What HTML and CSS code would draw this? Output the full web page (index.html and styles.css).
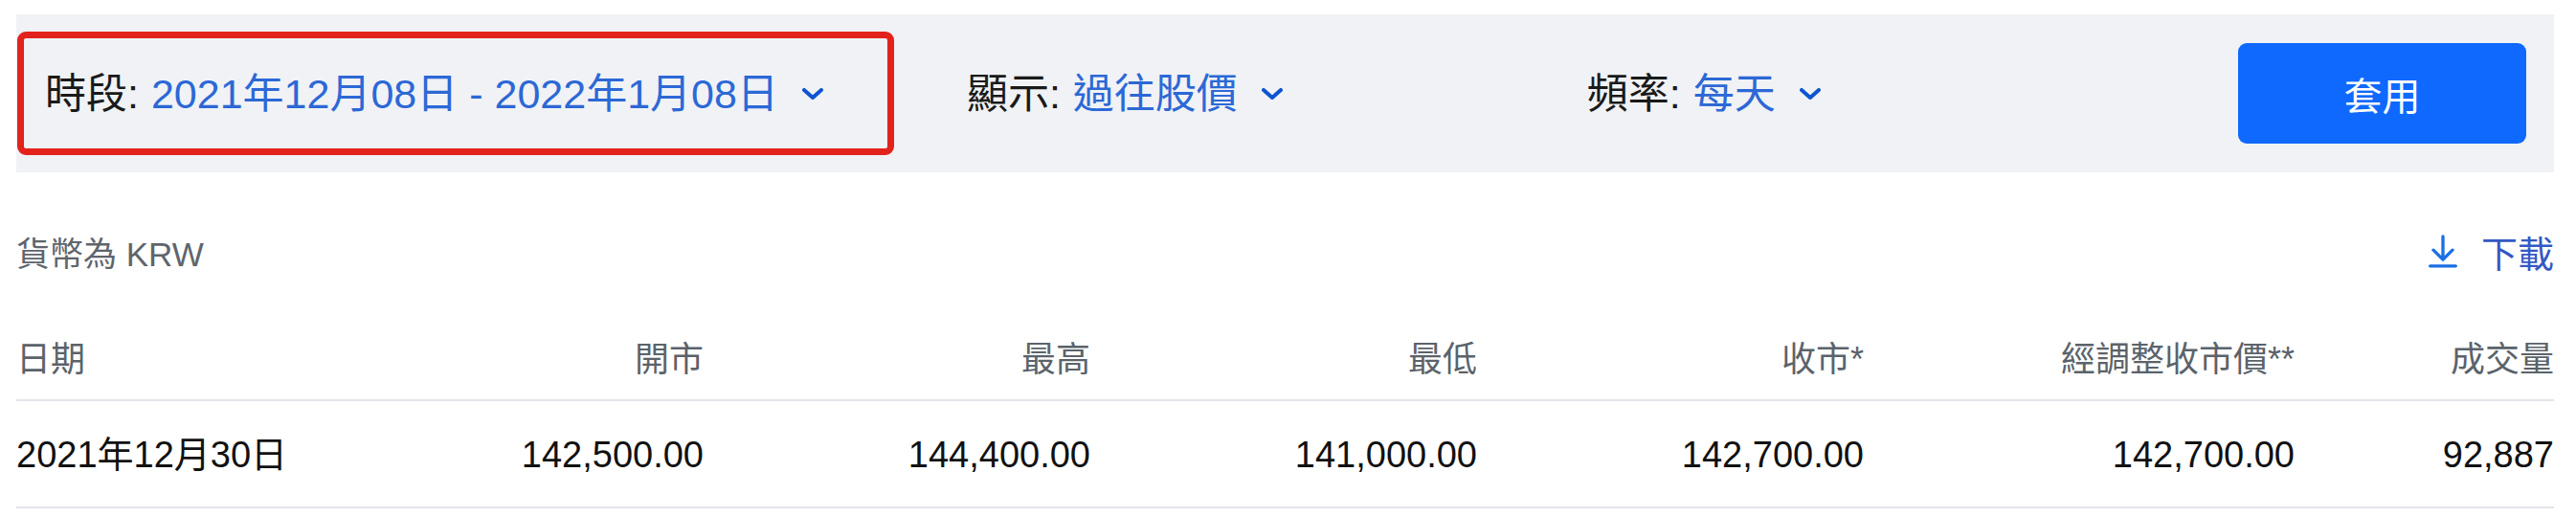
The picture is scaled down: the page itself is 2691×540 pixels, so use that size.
FILE: index.html
```html
<!DOCTYPE html>
<html lang="zh-Hant">
<head>
    <meta charset="UTF-8" />
    <title>過往股價</title>
    <link rel="stylesheet" href="styles.css">
</head>
<body>
<main>
    <div class="toolbar">
        <div class="filter filter-period">
            <span class="filter-label">時段:</span>
            <span class="filter-value">2021年12月08日 - 2022年1月08日</span>
            <svg class="chevron" viewBox="0 0 24 12"><path d="M3 2l9 8 9-8" /></svg>
        </div>
        <div class="filter filter-show">
            <span class="filter-label">顯示:</span>
            <span class="filter-value">過往股價</span>
            <svg class="chevron" viewBox="0 0 24 12"><path d="M3 2l9 8 9-8" /></svg>
        </div>
        <div class="filter filter-freq">
            <span class="filter-label">頻率:</span>
            <span class="filter-value">每天</span>
            <svg class="chevron" viewBox="0 0 24 12"><path d="M3 2l9 8 9-8" /></svg>
        </div>
        <button type="button" class="btn-apply">套用</button>
    </div>

    <div class="meta">
        <span class="currency">貨幣為 KRW</span>
        <a class="download" href="#">
            <svg class="download-icon" viewBox="0 0 24 24"><path d="M12 3v14M6 11.5l6 6 6-6M4 21.5h16" /></svg>
            <span>下載</span>
        </a>
    </div>

    <table class="prices">
        <thead>
            <tr>
                <th class="col-date">日期</th>
                <th class="col-num">開市</th>
                <th class="col-num">最高</th>
                <th class="col-num">最低</th>
                <th class="col-num">收市*</th>
                <th class="col-adj">經調整收市價**</th>
                <th class="col-vol">成交量</th>
            </tr>
        </thead>
        <tbody>
            <tr>
                <td>2021年12月30日</td>
                <td>142,500.00</td>
                <td>144,400.00</td>
                <td>141,000.00</td>
                <td>142,700.00</td>
                <td>142,700.00</td>
                <td>92,887</td>
            </tr>
        </tbody>
    </table>
</main>
</body>
</html>
```

FILE: styles.css
```css
/* Base */
* {
    box-sizing: border-box;
}
body {
    margin: 0;
    background: #fff;
    font-family: "Liberation Sans", "Noto Sans CJK TC", sans-serif;
    color: #111;
}
main {
    width: 2651px;
    margin: 0 0 0 17px;
    padding-top: 15px;
}

/* Barre de filtres */
.toolbar {
    display: flex;
    align-items: center;
    height: 165px;
    padding: 0 29px 0 1px;
    background: #f0f2f5;
}
.filter {
    display: flex;
    align-items: center;
    font-size: 43px;
    line-height: 48px;
}
.filter-label {
    color: #1a1a1a;
    margin-right: 13px;
}
.filter-value {
    color: #2c68d6;
}
.chevron {
    width: 24px;
    height: 12px;
    margin-left: 24px;
    fill: none;
    stroke: #0d55d0;
    stroke-width: 4;
    stroke-linecap: round;
    stroke-linejoin: round;
}
.filter-period {
    height: 129px;
    padding: 0 66px 0 22px;
    border: 7px solid #e3221c;
    border-radius: 9px;
}
.filter-show {
    margin-left: 76px;
}
.filter-freq {
    margin-left: 317px;
}
.btn-apply {
    margin-left: auto;
    width: 301px;
    height: 105px;
    border: none;
    border-radius: 9px;
    background: #0f69ff;
    color: #fff;
    font-family: inherit;
    font-size: 40px;
    cursor: pointer;
}

/* Devise + téléchargement */
.meta {
    display: flex;
    justify-content: space-between;
    align-items: center;
    height: 60px;
    margin-top: 52px;
}
.currency {
    font-size: 35px;
    color: #5f656c;
}
.download {
    display: flex;
    align-items: center;
    gap: 20px;
    font-size: 38px;
    color: #3558c4;
    text-decoration: none;
}
.download-icon {
    width: 40px;
    height: 40px;
    fill: none;
    stroke: #1c6fe6;
    stroke-width: 2;
    stroke-linecap: round;
    stroke-linejoin: round;
}

/* Tableau */
.prices {
    width: 100%;
    table-layout: fixed;
    border-collapse: separate;
    border-spacing: 0;
}
.prices th {
    padding: 62px 0 19px;
    font-size: 36px;
    line-height: 44px;
    font-weight: 400;
    color: #5b636a;
    text-align: right;
    border-bottom: 2px solid #e2e5e9;
}
.prices td {
    padding: 34px 0 32px;
    font-size: 38px;
    line-height: 44px;
    color: #111;
    text-align: right;
    border-bottom: 2px solid #e2e5e9;
}
.prices th.col-date,
.prices td:first-child {
    text-align: left;
}
.col-date { width: 314px; }
.col-num { width: 404px; }
.col-adj { width: 450px; }
.col-vol { width: 271px; }
```
